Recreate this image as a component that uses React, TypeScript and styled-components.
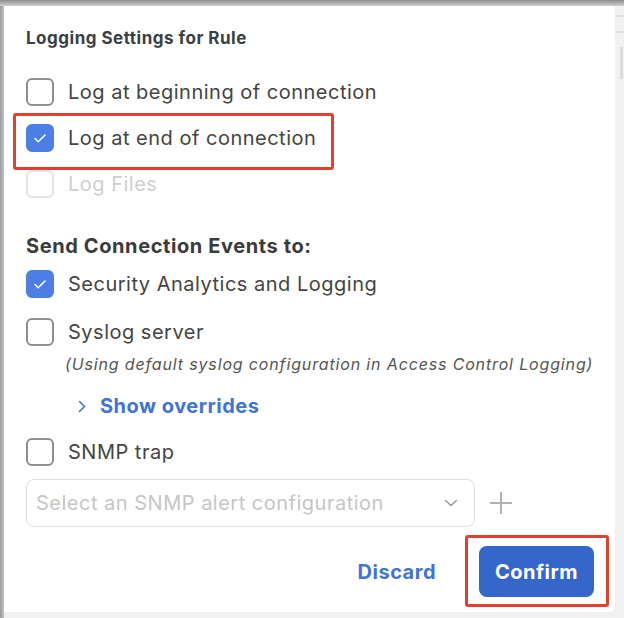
import styled, { createGlobalStyle, css } from 'styled-components';

const GlobalStyle = createGlobalStyle`
  html, body {
    margin: 0;
    padding: 0;
  }
  body {
    font-family: Inter, "Noto Sans", "Liberation Sans", sans-serif;
    color: #3d3d3d;
    letter-spacing: 0.5px;
  }
`;

const Page = styled.div`
  width: 624px;
  height: 618px;
  box-sizing: border-box;
  display: flex;
  align-items: flex-start;
  padding-top: 6px;
  overflow: hidden;
  background:
    linear-gradient(to bottom, #8d8d8d 0, #cfcfcf 6px, transparent 6px),
    linear-gradient(to right, #9a9a9a 0, #c4c4c4 4px, #f1f1f1 4px);
`;

const Panel = styled.section`
  width: 611px;
  margin-left: 4px;
  box-sizing: border-box;
  padding: 22px 21px 15px 22px;
  background: #ffffff;
  border-radius: 0 0 6px 0;
  display: flex;
  flex-direction: column;
`;

const Backdrop = styled.div`
  flex: 1;
  align-self: stretch;
  display: flex;
  flex-direction: column;
  padding-top: 9px;
  gap: 14px;
`;

const BackdropLine = styled.div`
  height: 2px;
  background: #e2e2e2;
`;

const BackdropBar = styled.div`
  width: 3px;
  height: 32px;
  margin-left: 5px;
  background: #dcdcdc;
`;

const Title = styled.h2`
  margin: 0;
  font-size: 17px;
  line-height: 20px;
  font-weight: 700;
  color: #3b3f45;
`;

const SectionTitle = styled.h3`
  margin: 36px 0 0;
  font-size: 20px;
  line-height: 24px;
  font-weight: 700;
  letter-spacing: 0.6px;
  color: #3b3b3b;
`;

const highlightBox = css`
  content: '';
  position: absolute;
  border: 3px solid #e5402c;
  border-radius: 3px;
  pointer-events: none;
`;

const Row = styled.label<{ $gap: number; $highlight?: boolean; $disabled?: boolean }>`
  position: relative;
  display: flex;
  align-items: center;
  gap: 14px;
  height: 28px;
  margin-top: ${(p) => p.$gap}px;
  font-size: 20px;
  line-height: 28px;
  color: ${(p) => (p.$disabled ? '#cfcfcf' : '#444444')};

  ${(p) =>
    p.$highlight &&
    css`
      &::after {
        ${highlightBox};
        left: -13px;
        top: -11px;
        width: 315px;
        height: 51px;
      }
    `}
`;

const Box = styled.span<{ $checked?: boolean; $disabled?: boolean }>`
  width: 28px;
  height: 28px;
  box-sizing: border-box;
  flex: none;
  border-radius: 6px;
  display: flex;
  align-items: center;
  justify-content: center;
  border: 2px solid
    ${(p) => (p.$checked ? '#4b7fe3' : p.$disabled ? '#e4e4e4' : '#8e8e8e')};
  background: ${(p) => (p.$checked ? '#4b7fe3' : '#ffffff')};
`;

const Note = styled.p`
  margin: 8px 0 0;
  padding-left: 39px;
  font-size: 16px;
  line-height: 20px;
  font-style: italic;
  letter-spacing: 0.85px;
  color: #555555;
`;

const Overrides = styled.a`
  margin-top: 20px;
  padding-left: 52px;
  display: flex;
  align-items: center;
  gap: 14px;
  height: 24px;
  font-size: 20px;
  font-weight: 700;
  color: #3f73d6;
  cursor: pointer;
`;

const SelectRow = styled.div`
  margin-top: 13px;
  display: flex;
  align-items: center;
  gap: 14px;
`;

const Select = styled.div`
  width: 449px;
  height: 48px;
  box-sizing: border-box;
  border: 1.5px solid #dedede;
  border-radius: 8px;
  padding: 0 16px 0 9px;
  display: flex;
  align-items: center;
  justify-content: space-between;
  font-size: 20px;
  color: #c6c6c6;
`;

const Footer = styled.div`
  margin-top: 19px;
  display: flex;
  justify-content: flex-end;
  align-items: center;
  gap: 43px;
`;

const TextButton = styled.button`
  border: none;
  background: none;
  padding: 0;
  font-family: inherit;
  font-size: 20px;
  font-weight: 700;
  letter-spacing: 0.5px;
  color: #3f73d6;
  cursor: pointer;
`;

const PrimaryButton = styled.button`
  position: relative;
  width: 115px;
  height: 51px;
  border: none;
  border-radius: 8px;
  background: #3567cb;
  color: #ffffff;
  font-family: inherit;
  font-size: 20px;
  font-weight: 700;
  letter-spacing: 0.5px;
  cursor: pointer;

  &::after {
    ${highlightBox};
    left: -14px;
    right: -15px;
    top: -11px;
    bottom: -10px;
  }
`;

function Check({ checked, disabled }: { checked?: boolean; disabled?: boolean }) {
  return (
    <Box $checked={checked} $disabled={disabled}>
      {checked && (
        <svg width="16" height="16" viewBox="0 0 16 16" fill="none">
          <path d="M3 8.5l3.2 3.2L13 5" stroke="#fff" strokeWidth="1.6" strokeLinecap="round" strokeLinejoin="round" />
        </svg>
      )}
    </Box>
  );
}

export default function App() {
  return (
    <>
      <GlobalStyle />
      <Page>
        <Panel>
          <Title>Logging Settings for Rule</Title>
          <Row $gap={30}>
            <Check />
            Log at beginning of connection
          </Row>
          <Row $gap={18} $highlight>
            <Check checked />
            Log at end of connection
          </Row>
          <Row $gap={18} $disabled>
            <Check disabled />
            Log Files
          </Row>

          <SectionTitle>Send Connection Events to:</SectionTitle>
          <Row $gap={12}>
            <Check checked />
            Security Analytics and Logging
          </Row>
          <Row $gap={20}>
            <Check />
            Syslog server
          </Row>
          <Note>(Using default syslog configuration in Access Control Logging)</Note>
          <Overrides>
            <svg width="8" height="13" viewBox="0 0 8 13" fill="none">
              <path d="M1.5 1.5l5 5-5 5" stroke="#3f73d6" strokeWidth="1.6" strokeLinecap="round" strokeLinejoin="round" />
            </svg>
            Show overrides
          </Overrides>
          <Row $gap={20}>
            <Check />
            SNMP trap
          </Row>
          <SelectRow>
            <Select>
              Select an SNMP alert configuration
              <svg width="14" height="8" viewBox="0 0 14 8" fill="none">
                <path d="M1.5 1.5l5.5 5 5.5-5" stroke="#9a9a9a" strokeWidth="1.5" strokeLinecap="round" strokeLinejoin="round" />
              </svg>
            </Select>
            <svg width="24" height="24" viewBox="0 0 24 24" fill="none">
              <path d="M12 1v22M1 12h22" stroke="#b3b3b3" strokeWidth="2" />
            </svg>
          </SelectRow>
          <Footer>
            <TextButton>Discard</TextButton>
            <PrimaryButton>Confirm</PrimaryButton>
          </Footer>
        </Panel>
        <Backdrop>
          <BackdropLine />
          <BackdropLine />
          <BackdropBar />
        </Backdrop>
      </Page>
    </>
  );
}
